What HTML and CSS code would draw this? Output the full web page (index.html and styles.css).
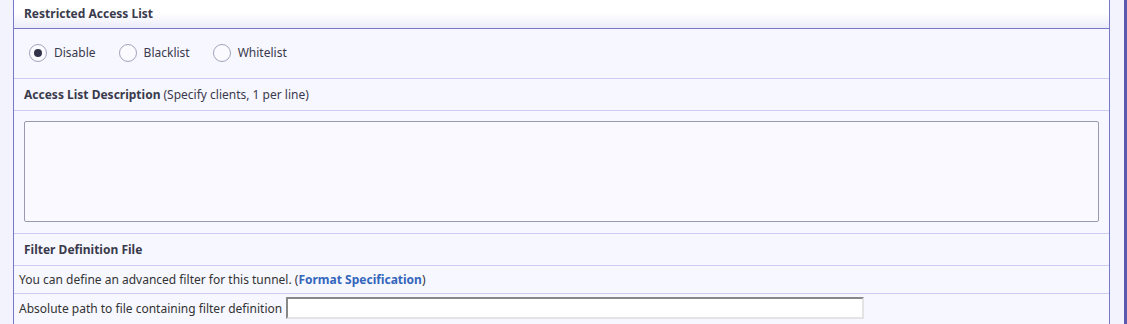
FILE: index.html
```html
<!DOCTYPE html>
<html lang="en">
<head>
  <meta charset="UTF-8" />
  <title>Tunnel Filter</title>
  <link rel="stylesheet" href="styles.css">
</head>
<body>

<div class="frame">
  <div class="panel">
    <div class="row head">Restricted Access List</div>

    <div class="row radios">
      <label class="radio"><span class="dot checked"></span>Disable</label>
      <label class="radio"><span class="dot"></span>Blacklist</label>
      <label class="radio"><span class="dot"></span>Whitelist</label>
    </div>

    <div class="row sub"><b>Access List Description</b> (Specify clients, 1 per line)</div>

    <div class="row area">
      <textarea class="box"></textarea>
    </div>

    <div class="row sub"><b>Filter Definition File</b></div>

    <div class="row plain">You can define an advanced filter for this tunnel. (<a href="#">Format Specification</a>)</div>

    <div class="row plain path">
      Absolute path to file containing filter definition
      <input type="text" class="field">
    </div>
  </div>
</div>

</body>
</html>
```

FILE: styles.css
```css
html, body {
  margin: 0;
  padding: 0;
  background: #f3f3fe;
  font-family: 'Noto Sans', 'Open Sans', sans-serif;
  font-size: 12px;
  color: #333;
  height: 100%;
}

.frame {
  height: 324px;
  width: 1124px;
  border-right: 3px solid #5a5ab0;
  overflow: hidden;
}

.panel {
  margin-left: 13px;
  width: 1095px;
  border-left: 1px solid #7777cc;
  border-right: 1px solid #7777cc;
  background: #f7f7ff;
  min-height: 324px;
}

.row {
  border-bottom: 1px solid #ccccf4;
  box-sizing: border-box;
}

.head {
  height: 29px;
  padding: 5px 10px 0;
  font-weight: bold;
  color: #3a3a4c;
  background: linear-gradient(to bottom, #ffffff 0, #ffffff 45%, #ececfa 100%);
  border-bottom: 1px solid #7777cc;
}

.radios {
  height: 50px;
  display: flex;
  align-items: center;
  gap: 23px;
  padding: 0 14px 2px 15px;
  color: #3a3a4c;
}

.radio {
  display: flex;
  align-items: center;
  gap: 7px;
}

.dot {
  width: 18px;
  height: 18px;
  border: 1.5px solid #a3a3bd;
  border-radius: 50%;
  background: #fafaff;
  display: flex;
  align-items: center;
  justify-content: center;
  box-sizing: border-box;
}

.dot.checked::after {
  content: "";
  width: 8px;
  height: 8px;
  border-radius: 50%;
  background: #33334a;
}

.sub {
  height: 32px;
  display: flex;
  align-items: center;
  padding: 0 10px;
  color: #3a3a4c;
}

.sub b {
  margin-right: 3px;
}

.area {
  height: 123px;
  padding: 10px 10px 0;
}

.box {
  display: block;
  width: 1075px;
  height: 101px;
  margin: 0;
  box-sizing: border-box;
  border: 1px solid #9a9aae;
  border-radius: 2px;
  background: #f9f9ff;
  resize: none;
}

.plain {
  height: 28px;
  display: flex;
  align-items: center;
  padding: 0 5px;
  color: #333;
}

.plain a {
  color: #3366bb;
  font-weight: bold;
  text-decoration: none;
}

.path {
  border-bottom: none;
  gap: 4px;
}

.field {
  width: 578px;
  height: 22px;
  box-sizing: border-box;
  margin: 0;
  border: 2px solid #e4e4e4;
  border-top-color: #888;
  border-left-color: #888;
  background: #fff;
}
```
